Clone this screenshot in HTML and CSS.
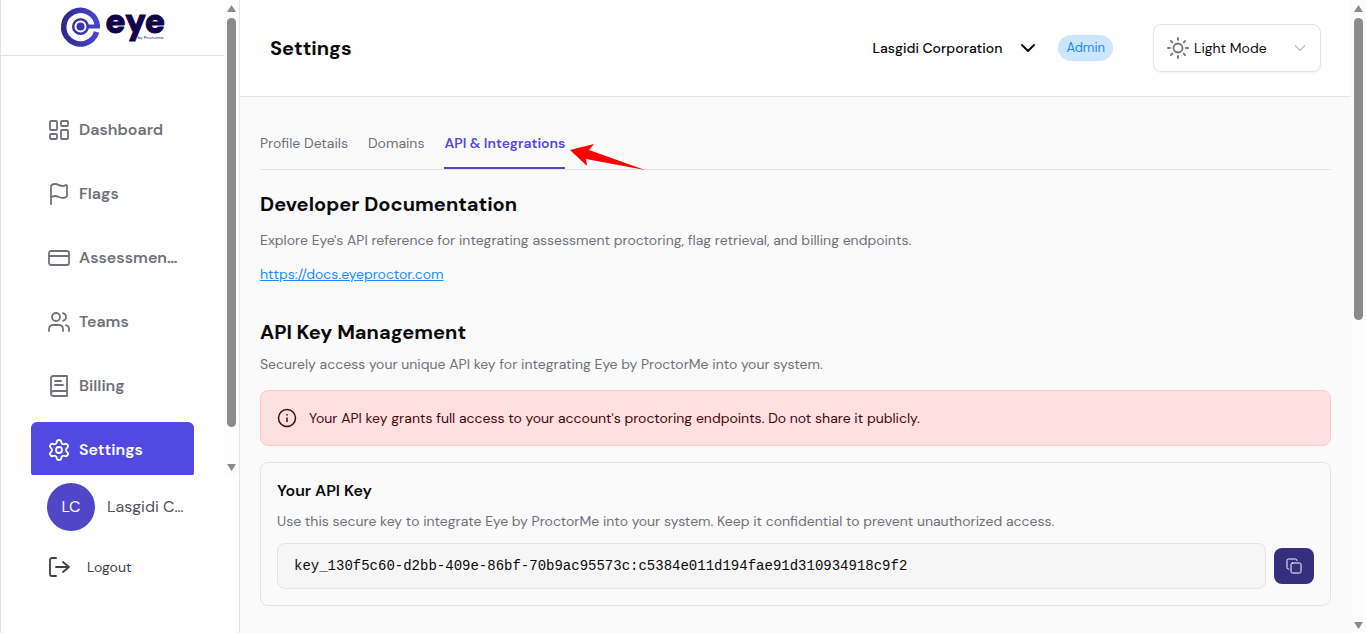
FILE: index.html
```
<!DOCTYPE html>
<html lang="en">
<head>
    <meta charset="UTF-8">
    <meta name="viewport" content="width=device-width, initial-scale=1.0">
    <title>Settings - Eye by ProctorMe</title>
    <link rel="stylesheet" href="styles.css">
</head>
<body>

    <aside class="sidebar">
        <div class="sidebar-scroll">
            <div class="sidebar-main">
                <div class="logo">
                    <svg width="104" height="42" viewBox="0 0 104 42" role="img" aria-label="Eye by ProctorMe">
                        <defs>
                            <linearGradient id="ring" x1="0" y1="0" x2="1" y2="0">
                                <stop offset="0" stop-color="#2e2a8c"/>
                                <stop offset="1" stop-color="#4a45d2"/>
                            </linearGradient>
                        </defs>
                        <path d="M36.300 19.500A16.800 16.800 0 1 0 35.600 25" fill="none" stroke="url(#ring)" stroke-width="5.500"/>
                        <path d="M39 19.500H26" stroke="#4540c4" stroke-width="4"/>
                        <circle cx="19.500" cy="19.500" r="7.300" fill="none" stroke="#3a35a8" stroke-width="2.500"/>
                        <circle cx="19.500" cy="19.500" r="4" fill="#3a35a8"/>
                        <text class="logo-name" x="44" y="26">eye</text>
                        <text class="logo-by" x="77" y="32">by Proctorme</text>
                    </svg>
                </div>

                <nav class="nav">
                    <a class="nav-item" href="#">
                        <svg class="icon" viewBox="0 0 24 24"><rect x="3" y="3" width="7" height="9" rx="1"/><rect x="14" y="3" width="7" height="5" rx="1"/><rect x="14" y="12" width="7" height="9" rx="1"/><rect x="3" y="16" width="7" height="5" rx="1"/></svg>
                        <span>Dashboard</span>
                    </a>
                    <a class="nav-item" href="#">
                        <svg class="icon" viewBox="0 0 24 24"><path d="M4 22V4a1 1 0 0 1 .4-.8A6 6 0 0 1 8 2c3 0 5 2 7.333 2q2 0 3.067-.8A1 1 0 0 1 20 4v10a1 1 0 0 1-.4.8A6 6 0 0 1 16 16c-3 0-5-2-8-2a6 6 0 0 0-4 1.528"/></svg>
                        <span>Flags</span>
                    </a>
                    <a class="nav-item" href="#">
                        <svg class="icon" viewBox="0 0 24 24"><rect x="2" y="5" width="20" height="14" rx="2"/><path d="M2 10h20"/></svg>
                        <span>Assessments</span>
                    </a>
                    <a class="nav-item" href="#">
                        <svg class="icon" viewBox="0 0 24 24"><path d="M16 21v-2a4 4 0 0 0-4-4H6a4 4 0 0 0-4 4v2"/><circle cx="9" cy="7" r="4"/><path d="M22 21v-2a4 4 0 0 0-3-3.870M16 3.130a4 4 0 0 1 0 7.750"/></svg>
                        <span>Teams</span>
                    </a>
                    <a class="nav-item" href="#">
                        <svg class="icon" viewBox="0 0 24 24"><path d="M4 19.500V4a2 2 0 0 1 2-2h14v20H6.500a2.500 2.500 0 0 1 0-5H20M8 7h6M8 11h8"/></svg>
                        <span>Billing</span>
                    </a>
                    <a class="nav-item active" href="#">
                        <svg class="icon" viewBox="0 0 24 24"><path d="M9.671 4.136a2.340 2.340 0 0 1 4.659 0 2.340 2.340 0 0 0 3.319 1.915 2.340 2.340 0 0 1 2.330 4.033 2.340 2.340 0 0 0 0 3.831 2.340 2.340 0 0 1-2.330 4.033 2.340 2.340 0 0 0-3.319 1.915 2.340 2.340 0 0 1-4.659 0 2.340 2.340 0 0 0-3.320-1.915 2.340 2.340 0 0 1-2.330-4.033 2.340 2.340 0 0 0 0-3.831A2.340 2.340 0 0 1 6.350 6.051a2.340 2.340 0 0 0 3.319-1.915"/><circle cx="12" cy="12" r="3"/></svg>
                        <span>Settings</span>
                    </a>
                </nav>
            </div>
            <div class="scrollbar">
                <svg class="scroll-arrow" viewBox="0 0 9 7"><path d="M4.500 0L9 7H0z"/></svg>
                <div class="scroll-track"><div class="scroll-thumb nav-thumb"></div></div>
                <svg class="scroll-arrow" viewBox="0 0 9 7"><path d="M4.500 7L9 0H0z"/></svg>
            </div>
        </div>

        <div class="account">
            <div class="user">
                <span class="avatar">LC</span>
                <span class="user-name">Lasgidi Corporation</span>
            </div>
            <button class="logout" type="button">
                <svg class="icon" viewBox="0 0 24 24"><path d="M9 3H5a2 2 0 0 0-2 2v14a2 2 0 0 0 2 2h4M9 12h13M16 7l6 5-6 5"/></svg>
                Logout
            </button>
        </div>
    </aside>

    <div class="page">
        <header class="topbar">
            <h1>Settings</h1>
            <button class="org" type="button">
                Lasgidi Corporation
                <svg class="icon-org" viewBox="0 0 16 16"><path d="M2 5l6 6 6-6"/></svg>
            </button>
            <span class="badge">Admin</span>
            <button class="mode" type="button">
                <svg class="icon" viewBox="0 0 24 24"><circle cx="12" cy="12" r="4.500"/><path d="M12 2v2M12 20v2M2 12h2M20 12h2M4.900 4.900l1.400 1.400M17.700 17.700l1.400 1.400M4.900 19.100l1.400-1.400M17.700 6.300l1.400-1.400"/></svg>
                <span>Light Mode</span>
                <svg class="icon-mode" viewBox="0 0 12 12"><path d="M2 4l4 4 4-4"/></svg>
            </button>
        </header>

        <main class="content">
            <nav class="tabs">
                <a href="#">Profile Details</a>
                <a href="#">Domains</a>
                <a class="active" href="#">API &amp; Integrations
                    <svg class="pointer" width="76" height="28" viewBox="0 0 76 28"><path d="M0 7L24 1 19 7 75 27 16 16 17 23z"/></svg>
                </a>
            </nav>

            <section class="docs">
                <h2>Developer Documentation</h2>
                <p>Explore Eye's API reference for integrating assessment proctoring, flag retrieval, and billing endpoints.</p>
                <a class="docs-link" href="#">https://docs.eyeproctor.com</a>
            </section>

            <section class="keys">
                <h2>API Key Management</h2>
                <p>Securely access your unique API key for integrating Eye by ProctorMe into your system.</p>

                <div class="alert">
                    <svg class="icon-alert" viewBox="0 0 20 20"><circle cx="10" cy="10" r="8.500"/><path d="M10 10v3.500M10 6.500v.5"/></svg>
                    <span>Your API key grants full access to your account's proctoring endpoints. Do not share it publicly.</span>
                </div>

                <div class="card">
                    <h3><label for="apiKey">Your API Key</label></h3>
                    <p>Use this secure key to integrate Eye by ProctorMe into your system. Keep it confidential to prevent unauthorized access.</p>
                    <div class="key-row">
                        <input type="text" id="apiKey" readonly value="key_130f5c60-d2bb-409e-86bf-70b9ac95573c:c5384e011d194fae91d310934918c9f2">
                        <button class="copy" type="button" aria-label="Copy">
                            <svg class="icon-copy" viewBox="0 0 16 16"><rect x="5" y="5" width="10" height="10" rx="1.500"/><path d="M3 11H2.500A1.500 1.500 0 0 1 1 9.500v-7A1.500 1.500 0 0 1 2.500 1h7A1.500 1.500 0 0 1 11 2.500"/></svg>
                        </button>
                    </div>
                </div>
            </section>
        </main>
    </div>

    <div class="scrollbar">
        <svg class="scroll-arrow" viewBox="0 0 9 7"><path d="M4.500 0L9 7H0z"/></svg>
        <div class="scroll-track"><div class="scroll-thumb page-thumb"></div></div>
        <svg class="scroll-arrow" viewBox="0 0 9 7"><path d="M4.500 7L9 0H0z"/></svg>
    </div>

</body>
</html>
```
FILE: styles.css
```
* { box-sizing: border-box; }
body { margin: 0; display: flex; height: 100vh; overflow: hidden; background: #fafafa; color: #09090b; font-family: "DM Sans", Inter, sans-serif; font-size: 14px; line-height: 20px; }
h1, h2, h3, p { margin: 0; }
h1, h2 { font-size: 20px; line-height: 28px; font-weight: 700; }
a { color: inherit; text-decoration: none; }
button { font: inherit; color: inherit; background: none; border: 0; padding: 0; }
svg { flex: none; fill: none; stroke: currentColor; stroke-linecap: round; stroke-linejoin: round; }
.icon { width: 24px; height: 24px; stroke-width: 1.800; }

/* Sidebar */
.sidebar { flex: none; width: 240px; display: flex; flex-direction: column; background: #fff; border-left: 1px solid #e4e4e7; border-right: 1px solid #e4e4e7; }
.sidebar-scroll { flex: 1; min-height: 0; display: flex; overflow: hidden; }
.sidebar-main { flex: 1; min-width: 0; }
.logo { height: 56px; display: flex; justify-content: center; align-items: center; border-bottom: 1px solid #e4e4e7; }
.logo svg { stroke: none; overflow: visible; }
.logo path { stroke-linecap: butt; }
.logo-name { fill: #12004a; stroke: #12004a; stroke-width: 1; font-size: 34px; font-weight: 900; }
.logo-by { fill: #12004a; font-size: 4px; }
.nav { padding: 46px 30px 0; display: flex; flex-direction: column; gap: 8px; }
.nav-item { height: 56px; padding: 0 16px; display: flex; align-items: center; gap: 8px; border-radius: 6px; color: #71717a; font-size: 16px; line-height: 24px; font-weight: 600; }
.nav-item span { overflow: hidden; white-space: nowrap; text-overflow: ellipsis; }
.nav-item.active { background: #5249e1; color: #fff; }
.account { flex: none; height: 158px; padding: 8px 46px; }
.user { display: flex; align-items: center; gap: 12px; color: #52525b; font-size: 16px; }
.avatar { flex: none; width: 48px; height: 48px; border-radius: 50%; background: #4f46c8; color: #fff; line-height: 48px; text-align: center; }
.user-name { overflow: hidden; white-space: nowrap; text-overflow: ellipsis; }
.logout { margin-top: 24px; display: flex; align-items: center; gap: 16px; color: #3f3f46; }

/* Scrollbars */
.scrollbar { flex: none; width: 15px; padding: 5px 0 4px; display: flex; flex-direction: column; align-items: center; background: #fcfcfc; }
.scroll-arrow { width: 9px; height: 7px; fill: #8b8b8b; stroke: none; }
.scroll-track { flex: 1; width: 9px; padding: 6px 0; }
.scroll-thumb { border-radius: 5px; background: #8b8b8b; }
.nav-thumb { height: 93%; }
.page-thumb { height: 50.5%; }

/* Top bar */
.page { flex: 1; min-width: 0; }
.topbar { height: 97px; padding: 0 30px; display: flex; align-items: center; background: #fff; border-bottom: 1px solid #e4e4e7; }
.org { margin-left: auto; display: flex; align-items: center; gap: 18px; font-weight: 500; }
.icon-org { width: 16px; height: 16px; stroke-width: 2; }
.badge { margin: 0 40px 0 22px; padding: 3px 8px; border-radius: 16px; background: #cce6ff; color: #1a8cff; font-size: 13px; }
.mode { width: 168px; height: 48px; padding: 0 13px 0 12px; display: flex; align-items: center; gap: 4px; border: 1px solid #e4e4e7; border-radius: 8px; box-shadow: 0 1px 2px #0000000d; }
.mode .icon { color: #71717a; }
.icon-mode { width: 14px; height: 14px; margin-left: auto; color: #b4b4b8; }

/* Settings content */
.content { padding: 26px 20px; color: #71717a; }
.content h2, .content h3 { color: #09090b; }
.tabs { height: 47px; display: flex; gap: 20px; border-bottom: 1px solid #e4e4e7; }
.tabs a { position: relative; padding-top: 10px; }
.tabs .active { border-bottom: 2px solid #4f46c8; color: #5249e1; font-weight: 600; }
.pointer { position: absolute; left: 100%; top: 20px; margin-left: 5px; fill: #f00; stroke: none; }
.docs { padding-top: 20px; }
.docs p { margin: 12px 0 14px; }
.docs-link { color: #1a8cff; text-decoration: underline; }
.keys { padding-top: 34px; }
.keys p { margin-top: 8px; }
.alert { margin: 16px 0; height: 56px; padding: 0 16px; display: flex; align-items: center; gap: 12px; border: 1px solid #ffc9cc; border-radius: 8px; background: #ffe0e1; color: #460809; }
.icon-alert { width: 20px; height: 20px; stroke-width: 1.500; }
.card { padding: 16px; border: 1px solid #e4e4e7; border-radius: 8px; }
.card h3 { font-size: 16px; line-height: 24px; font-weight: 600; }
.key-row { margin-top: 12px; display: flex; align-items: center; gap: 8px; }
.key-row input { flex: 1; min-width: 0; height: 46px; padding: 0 16px; border: 1px solid #e4e4e7; border-radius: 8px; background: #f6f6f6; color: #09090b; font: 14px "Liberation Mono", monospace; }
.copy { width: 40px; height: 36px; display: flex; align-items: center; justify-content: center; border-radius: 8px; background: #352f80; color: #fff; }
.icon-copy { width: 16px; height: 16px; }
```
